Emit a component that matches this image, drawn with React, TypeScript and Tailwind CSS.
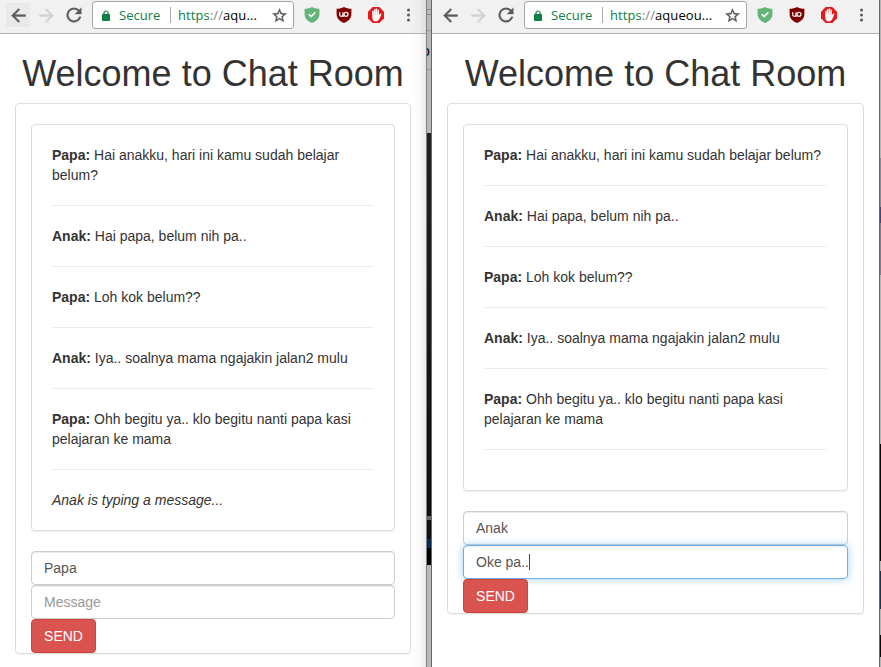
import React from "react";

type Message = { from: string; text: string };

const messages: Message[] = [
  { from: "Papa", text: "Hai anakku, hari ini kamu sudah belajar belum?" },
  { from: "Anak", text: "Hai papa, belum nih pa.." },
  { from: "Papa", text: "Loh kok belum??" },
  { from: "Anak", text: "Iya.. soalnya mama ngajakin jalan2 mulu" },
  { from: "Papa", text: "Ohh begitu ya.. klo begitu nanti papa kasi pelajaran ke mama" },
];

function Shield({ color, children }: { color: string; children: React.ReactNode }) {
  return (
    <svg width="16" height="16" viewBox="0 0 16 16" className="block shrink-0">
      <path d="M8 0C6 1.2 3.5 1.8.6 1.8V7c0 4.2 3 7.2 7.4 9 4.4-1.8 7.4-4.8 7.4-9V1.8C12.5 1.8 10 1.2 8 0Z" fill={color} />
      {children}
    </svg>
  );
}

function Toolbar({ url, hovered }: { url: string; hovered?: boolean }) {
  return (
    <div className="flex h-[34px] shrink-0 items-start border-b border-[#b4b4b4] bg-[#f1f1f1] pl-1.5 font-['Open_Sans','Noto_Sans',sans-serif] text-[13px] leading-[27px]">
      <div className={`mt-[3px] flex h-6 w-6 shrink-0 items-center justify-center rounded-[2px] ${hovered ? "bg-[#e9e9e9]" : ""}`}>
        <svg width="21" height="21" viewBox="0 0 24 24" fill="#5a5a5a" stroke="#5a5a5a" strokeWidth=".5">
          <path d="M20 11H7.83l5.59-5.59L12 4l-8 8 8 8 1.41-1.41L7.83 13H20v-2z" />
        </svg>
      </div>
      <div className="mt-[3px] ml-1 flex h-6 w-6 shrink-0 items-center justify-center">
        <svg width="21" height="21" viewBox="0 0 24 24" fill="#d2d2d2" stroke="#d2d2d2" strokeWidth=".5">
          <path d="M12 4l-1.41 1.41L16.17 11H4v2h12.17l-5.58 5.59L12 20l8-8z" />
        </svg>
      </div>
      <div className="mt-[3px] ml-1 flex h-6 w-6 shrink-0 items-center justify-center">
        <svg width="22" height="22" viewBox="0 0 24 24" fill="#5a5a5a" stroke="#5a5a5a" strokeWidth=".3">
          <path d="M17.65 6.35C16.2 4.9 14.21 4 12 4c-4.42 0-7.99 3.58-7.99 8s3.57 8 7.99 8c3.73 0 6.84-2.55 7.73-6h-2.08c-.82 2.33-3.04 4-5.65 4-3.31 0-6-2.69-6-6s2.69-6 6-6c1.66 0 3.14.69 4.22 1.78L13 11h7V4l-2.35 2.35z" />
        </svg>
      </div>
      <div className="mt-px ml-1.5 flex h-7 min-w-0 flex-1 items-center rounded-[3px] border border-[#a6a6a6] bg-white">
        <svg width="8" height="11" viewBox="0 0 8 11" className="ml-[9px] shrink-0">
          <path d="M2 5V3a2 2 0 0 1 4 0v2" fill="none" stroke="#0b8043" strokeWidth="1.2" />
          <rect y="4" width="8" height="7" rx=".8" fill="#0b8043" />
        </svg>
        <span className="ml-[9px] w-[51px] shrink-0 text-[#0b8043]">Secure</span>
        <span className="h-4 w-px shrink-0 bg-[#a9a9a9]" />
        <span className="ml-[7px] flex-1 tracking-[0.08px] whitespace-nowrap text-black">
          <span className="text-[#0b8043]">https</span>
          <span className="text-[#808080]">://</span>
          {url}
        </span>
        <svg width="17" height="17" viewBox="0 0 24 24" fill="#5a5a5a" stroke="#5a5a5a" strokeWidth=".5" className="mr-[5px] shrink-0">
          <path d="M22 9.24l-7.19-.62L12 2 9.19 8.63 2 9.24l5.46 4.73L5.82 21 12 17.27 18.18 21l-1.63-7.03L22 9.24zM12 15.4l-3.76 2.27 1-4.28-3.32-2.88 4.38-.38L12 6.1l1.71 4.04 4.38.38-3.32 2.88 1 4.28L12 15.4z" />
        </svg>
      </div>
      <div className="mt-[7px] ml-[10px] flex w-[122px] shrink-0 items-center">
        <Shield color="#63b478">
          <path d="M4.8 7.2l2.4 2.4 4.2-4.3" fill="none" stroke="#fff" strokeWidth="1.6" />
        </Shield>
        <div className="ml-4">
          <Shield color="#800000">
            <path d="M3.7 5.2v2.600q0 1.500 1.600 1.500T7 7.800V5.200M7 5.200v4h1" fill="none" stroke="#fff" strokeWidth="1.2" />
            <circle cx="10" cy="7.3" r="2" fill="none" stroke="#fff" strokeWidth="1.2" />
          </Shield>
        </div>
        <svg width="16" height="16" viewBox="0 0 16 16" className="ml-4 shrink-0">
          <path d="M4.7 0h6.600L16 4.700v6.600L11.300 16H4.700L0 11.300V4.700Z" fill="#e3191c" />
          <path d="M4.2 8V4.200q.7-.8 1.400 0V7l.2-4.400q.8-.8 1.500 0V7l.3-5.200q.8-.7 1.500 0V7l.4-4.200q.8-.7 1.400 0v5.700l1-1.700q1-.8 1.600 0L11.800 11q-.9 3-3.300 3.500-3 .2-4-2.200Z" fill="#fff" />
          <path d="M5.700 4v4M7.500 3v5M9.300 3v5" stroke="#ee9295" strokeWidth=".4" />
        </svg>
        <svg width="3" height="14" viewBox="0 0 3 14" fill="#5a5a5a" className="ml-[23px] shrink-0">
          <circle cx="1.5" cy="2" r="1.5" />
          <circle cx="1.5" cy="7" r="1.5" />
          <circle cx="1.5" cy="12" r="1.5" />
        </svg>
      </div>
    </div>
  );
}

function ChatPage({ name, draft, typing, focused }: { name: string; draft?: string; typing?: string; focused?: boolean }) {
  return (
    <div className="px-[15px] font-['Liberation_Sans',Arial,sans-serif] text-sm leading-5 text-[#333]">
      <h1 className="mt-5 mb-[10px] h-[39px] text-center text-[36px] leading-[39px] whitespace-nowrap">Welcome to Chat Room</h1>
      <div className="rounded border border-[#ddd] px-[15px] pt-5 shadow-[0_1px_1px_rgba(0,0,0,.05)]">
        <div className="mb-5 rounded border border-[#ddd] p-5 shadow-[0_1px_1px_rgba(0,0,0,.05)]">
          {messages.map((m, i) => (
            <div key={i} className={`border-b border-[#eee] pb-5 ${i > 0 ? "mt-5" : ""}`}>
              <strong>{m.from}:</strong> {m.text}
            </div>
          ))}
          <div className="pt-5">{typing && <em>{typing}</em>}</div>
        </div>
        <div className="h-[34px] rounded border border-[#ccc] px-3 py-1.5 text-[#555] shadow-[inset_0_1px_1px_rgba(0,0,0,.075)]">{name}</div>
        <div
          className={`flex h-[34px] items-center rounded border px-3 ${
            focused
              ? "border-[#66afe9] shadow-[inset_0_1px_1px_rgba(0,0,0,.075),0_0_8px_rgba(102,175,233,.6)]"
              : "border-[#ccc] shadow-[inset_0_1px_1px_rgba(0,0,0,.075)]"
          }`}
        >
          {draft ? <span className="text-[#555]">{draft}</span> : <span className="text-[#999]">Message</span>}
          {focused && <span className="h-4 w-px bg-[#444]" />}
        </div>
        <button className="relative block h-[34px] w-[65px] rounded border border-[#d43f3a] bg-[#d9534f] text-white">SEND</button>
      </div>
    </div>
  );
}

export default function App() {
  return (
    <div className="flex h-[667px] w-[881px] overflow-hidden bg-white">
      <div className="relative flex w-[426px] shrink-0 flex-col bg-white">
        <Toolbar url="aqu..." hovered />
        <ChatPage name="Papa" typing="Anak is typing a message..." />
        <div className="absolute inset-y-0 right-0 w-3.5 bg-linear-to-r from-transparent via-black/2 to-black/8" />
      </div>
      <div className="flex w-[5px] shrink-0 flex-col overflow-hidden border-l border-black/30 bg-[#b9b9b9]">
        <div className="h-[10px] border-b border-[#888]" />
        <div className="h-[5px] border-b border-[#888]" />
        <div className="h-4 border-b border-[#999]" />
        <div className="h-[39px] border-b border-[#999] pt-[10px]">
          <span className="-ml-[5px] block font-['Liberation_Sans',sans-serif] text-sm leading-5 text-black">o</span>
        </div>
        <div className="h-[63px]" />
        <div className="h-[383px] bg-linear-to-b from-[#222] to-[#0d0d0d]" />
        <div className="h-1 bg-[#666]" />
        <div className="h-[19px] bg-[#101010]" />
        <div className="h-[9px] bg-[#062b50]" />
        <div className="h-[17px] bg-black" />
      </div>
      <div className="flex w-[449px] shrink-0 flex-col border-x border-[#1c7bc2] bg-white">
        <Toolbar url="aqueou..." />
        <ChatPage name="Anak" draft="Oke pa.." focused />
      </div>
      <div className="flex w-px shrink-0 flex-col bg-[#b5b5b5]">
        <div className="h-[158px]" />
        <div className="h-[49px] bg-[#8a8796]" />
        <div className="h-4 bg-[#45457e]" />
        <div className="h-[52px] bg-[#817c90]" />
        <div className="h-[169px]" />
        <div className="h-[117px] bg-[#090909]" />
        <div className="h-[10px]" />
        <div className="h-[38px] bg-[#15364f]" />
        <div className="h-[26px]" />
        <div className="h-[22px] bg-[#090909]" />
      </div>
    </div>
  );
}
